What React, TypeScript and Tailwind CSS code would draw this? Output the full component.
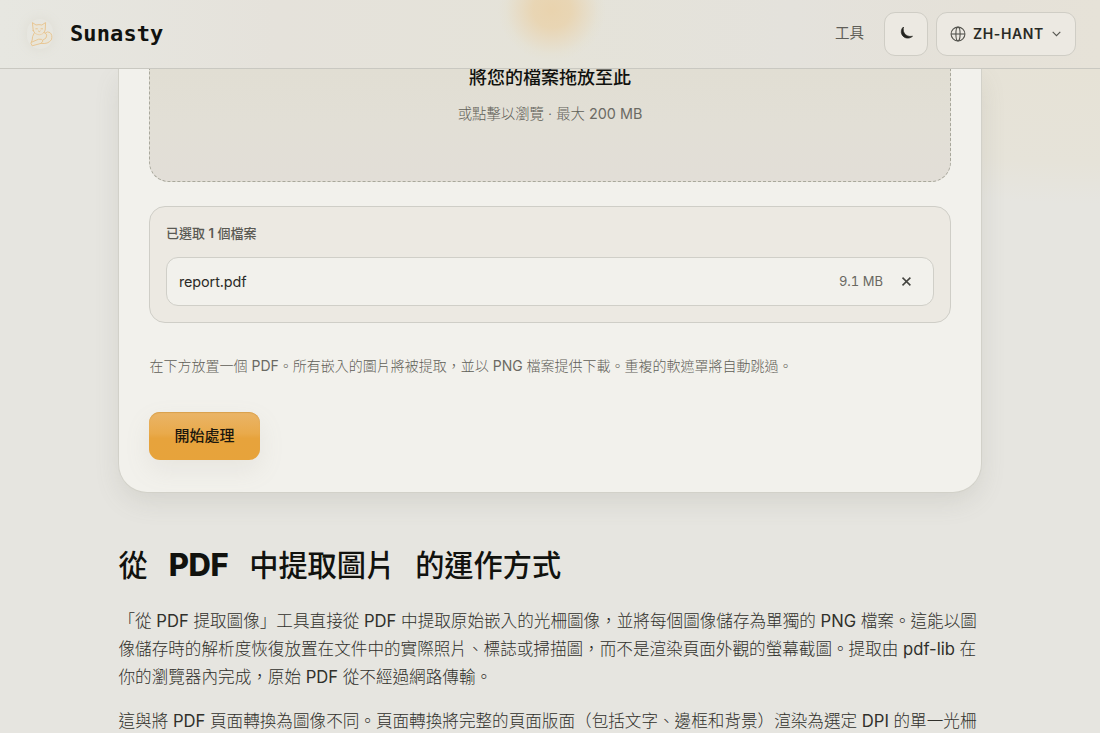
import React from "react";

function CatLogo() {
  return (
    <svg width="26" height="30" viewBox="0 0 26 30" fill="none" stroke="#e9bf83" strokeWidth="0.9" strokeLinecap="round" strokeLinejoin="round" opacity="0.9">
      <path d="M6.2 11.4 L5.4 3.6 L9 6 Q12 5.2 14.8 6 L18.6 3.6 L18.2 11 Q17 15.5 12.2 15.8 Q7.6 15.5 6.2 11.4Z" fill="#efe3cd" fillOpacity="0.5" />
      <path d="M8.8 9.8h1.6M14 9.8h1.6M11.4 12l.9.7.9-.7" />
      <path d="M7 14.4 Q5 17.6 5.2 21 Q2.6 24.6 5.2 26.8 L14 24.4 Q21 25.4 24.4 20.8 Q25.8 16 23 13.6 Q20.4 12 18.4 14 L16.8 13.6" fill="#efe3cd" fillOpacity="0.4" />
      <path d="M4.6 23.2 L11.6 20.2 Q15.4 19.6 16 22 L14 24.4M18.4 14 Q21 15.6 19 19 L16 21" />
    </svg>
  );
}

function Header() {
  return (
    <header className="relative flex h-[69px] shrink-0 items-center justify-between overflow-hidden border-b border-[#c9c8c1] bg-[linear-gradient(90deg,#e7e7e1_0%,#e5e2db_25%,#e5e3d9_50%,#e4e2dc_72%,#e5e1d8_90%,#e6e2d8_100%)] pr-6 pl-[27px]">
      <div className="absolute -top-[41px] left-[498px] h-[102px] w-[108px] bg-[radial-gradient(ellipse_closest-side,#e9d3ae_0%,#e9d4b0e6_35%,#e8d8bba0_62%,#e6dec740_85%,#e6dec700_100%)]" />
      <div className="relative flex items-center">
        <div className="rounded-full shadow-[0_0_12px_#dedcd2]">
          <CatLogo />
        </div>
        <span className="ml-[17px] font-['DejaVu_Sans_Mono',monospace] text-[22px] leading-7 font-bold tracking-[0.1px] text-[#11120e]">Sunasty</span>
      </div>
      <div className="relative -top-px flex items-center">
        <span className="mr-5 text-[14.5px] text-[#5f5e58]">工具</span>
        <button className="relative top-px mr-2 flex h-11 w-11 items-center justify-center rounded-[11px] border border-[#cfcdc5] bg-[#ece9e2]">
          <svg width="16" height="16" viewBox="0 0 16 16" className="relative left-px -top-px">
            <path d="M4.5 2 C2.2 3.8 1.6 7 3 9.7 C5 13.4 10 14.3 13.5 11.3 C9.6 12 6.6 10.6 5.2 8 C4.1 6.1 4 4 4.5 2Z" fill="#22231e" stroke="#22231e" strokeWidth="0.7" strokeLinejoin="round" />
          </svg>
        </button>
        <button className="relative top-px flex h-11 w-[140px] items-center rounded-[11px] border border-[#cfcdc5] bg-[#ece9e2] pl-[13px]">
          <svg width="16" height="16" viewBox="0 0 16 16" fill="none" stroke="#55554f" strokeWidth="1.1">
            <circle cx="8" cy="8" r="6.9" />
            <ellipse cx="8" cy="8" rx="2.1" ry="6.9" />
            <path d="M1.1 8h13.8" />
          </svg>
          <span className="-mt-px ml-[7px] text-[14px] font-semibold tracking-[0.6px] text-[#292a25]">ZH-HANT</span>
          <svg width="9" height="6" viewBox="0 0 9 6" fill="none" stroke="#55554f" strokeWidth="1.1" className="ml-2">
            <path d="M.7 .8 4.5 4.7 8.3 .8" />
          </svg>
        </button>
      </div>
    </header>
  );
}

function UploadCard() {
  return (
    <section className="mx-[118px] h-[423.5px] rounded-b-[29px] border border-t-0 border-[#d2d1c9] bg-[#f2f1ec] px-[30px] shadow-[0_10px_26px_-2px_#73726528]">
      <div className="flex h-[113px] flex-col items-center rounded-b-[20px] border border-t-0 border-dashed border-[#a9a89c] bg-[linear-gradient(180deg,#e1ded3_0%,#e2dfd6_50%,#e2ded7_100%)]">
        <p className="-mt-[5px] text-[18px] leading-7 font-medium text-[#11120e]">將您的檔案拖放至此</p>
        <p className="mt-[11px] text-[14.4px] leading-[22px] font-light text-[#5f5e57]">
          或點擊以瀏覽 · 最大 <span className="font-normal text-[#6b6a63]">200 MB</span>
        </p>
      </div>
      <div className="mt-6 h-[117px] rounded-2xl border border-[#cfcec7] bg-[#ece9e2] px-4 pt-4">
        <p className="text-[13px] leading-5 font-medium text-[#5a5953]">
          已選取 <span className="font-semibold">1</span> 個檔案
        </p>
        <div className="mt-[14px] flex h-[49px] items-center rounded-xl border border-[#d0cfc8] bg-[#f2f1ec] px-3">
          <span className="flex-1 text-[14.4px] tracking-[-0.1px] text-[#2b2b27]">report.pdf</span>
          <span className="text-[13px] tabular-nums text-[#696861]">9.1 MB</span>
          <svg width="11" height="11" viewBox="0 0 11 11" stroke="#44443f" strokeWidth="1.5" className="mr-[9px] ml-[18px]">
            <path d="M1.5 1.6 9.4 9.4M9.4 1.6 1.5 9.4" />
          </svg>
        </div>
      </div>
      <p className="mt-8 pl-[0.5px] text-[14px] leading-[22px] font-light whitespace-nowrap text-[#5f5e57]">
        在下方放置一個 <span className="font-normal text-[#6b6a63]">PDF</span>。所有嵌入的圖片將被提取，並以 <span className="font-normal text-[#6b6a63]">PNG</span> 檔案提供下載。重複的軟遮罩將自動跳過。
      </p>
      <button className="mt-[35px] h-12 w-[111px] rounded-[11px] bg-[linear-gradient(180deg,#eab568_0%,#e9aa4b_45%,#e7a33c_55%,#e7a33b_100%)] text-[15px] font-medium text-[#1b170d] shadow-[0_10px_24px_#9d9b8a20,inset_0_1px_1px_#d9a04c]">
        開始處理
      </button>
    </section>
  );
}

function Latin({ children }: { children: React.ReactNode }) {
  return <span className="font-normal tracking-normal">{children}</span>;
}

export default function App() {
  return (
    <div lang="zh-Hant" className="flex h-[733px] w-[1100px] flex-col overflow-hidden bg-[#e6e5e0] font-['Inter','Noto_Sans_CJK_TC',sans-serif]">
      <Header />
      <main className="flex-1 overflow-hidden bg-[radial-gradient(ellipse_420px_135px_at_1100px_0px,#e6e2d6_0%,#e6e3d9_70%,#e6e5e000_100%)]">
        <UploadCard />
        <article className="mx-[118.5px] mt-[51px]">
          <h2 className="flex h-11 items-center text-[29.2px] font-medium whitespace-nowrap text-[#11120e]">
            <span>從</span>
            <span className="ml-[21px] text-[31px] font-extrabold tracking-[-0.4px]">PDF</span>
            <span className="ml-[21px]">中提取圖片</span>
            <span className="ml-[20px]">的運作方式</span>
          </h2>
          <div className="mt-[19px] text-[16.6px] leading-[28.4px] font-light whitespace-nowrap text-[#30302b]">
            <p>
              「從 <Latin>PDF</Latin> 提取圖像」工具直接從 <Latin>PDF</Latin> 中提取原始嵌入的光柵圖像，並將每個圖像儲存為單獨的 <Latin>PNG</Latin> 檔案。這能以圖
              <br />
              像儲存時的解析度恢復放置在文件中的實際照片、標誌或掃描圖，而不是渲染頁面外觀的螢幕截圖。提取由 <Latin>pdf-lib</Latin> 在
              <br />
              你的瀏覽器內完成，原始 <Latin>PDF</Latin> 從不經過網路傳輸。
            </p>
            <p className="mt-[15.5px]">
              這與將 <Latin>PDF</Latin> 頁面轉換為圖像不同。頁面轉換將完整的頁面版面（包括文字、邊框和背景）渲染為選定 <Latin>DPI</Latin> 的單一光柵
            </p>
          </div>
        </article>
      </main>
    </div>
  );
}
